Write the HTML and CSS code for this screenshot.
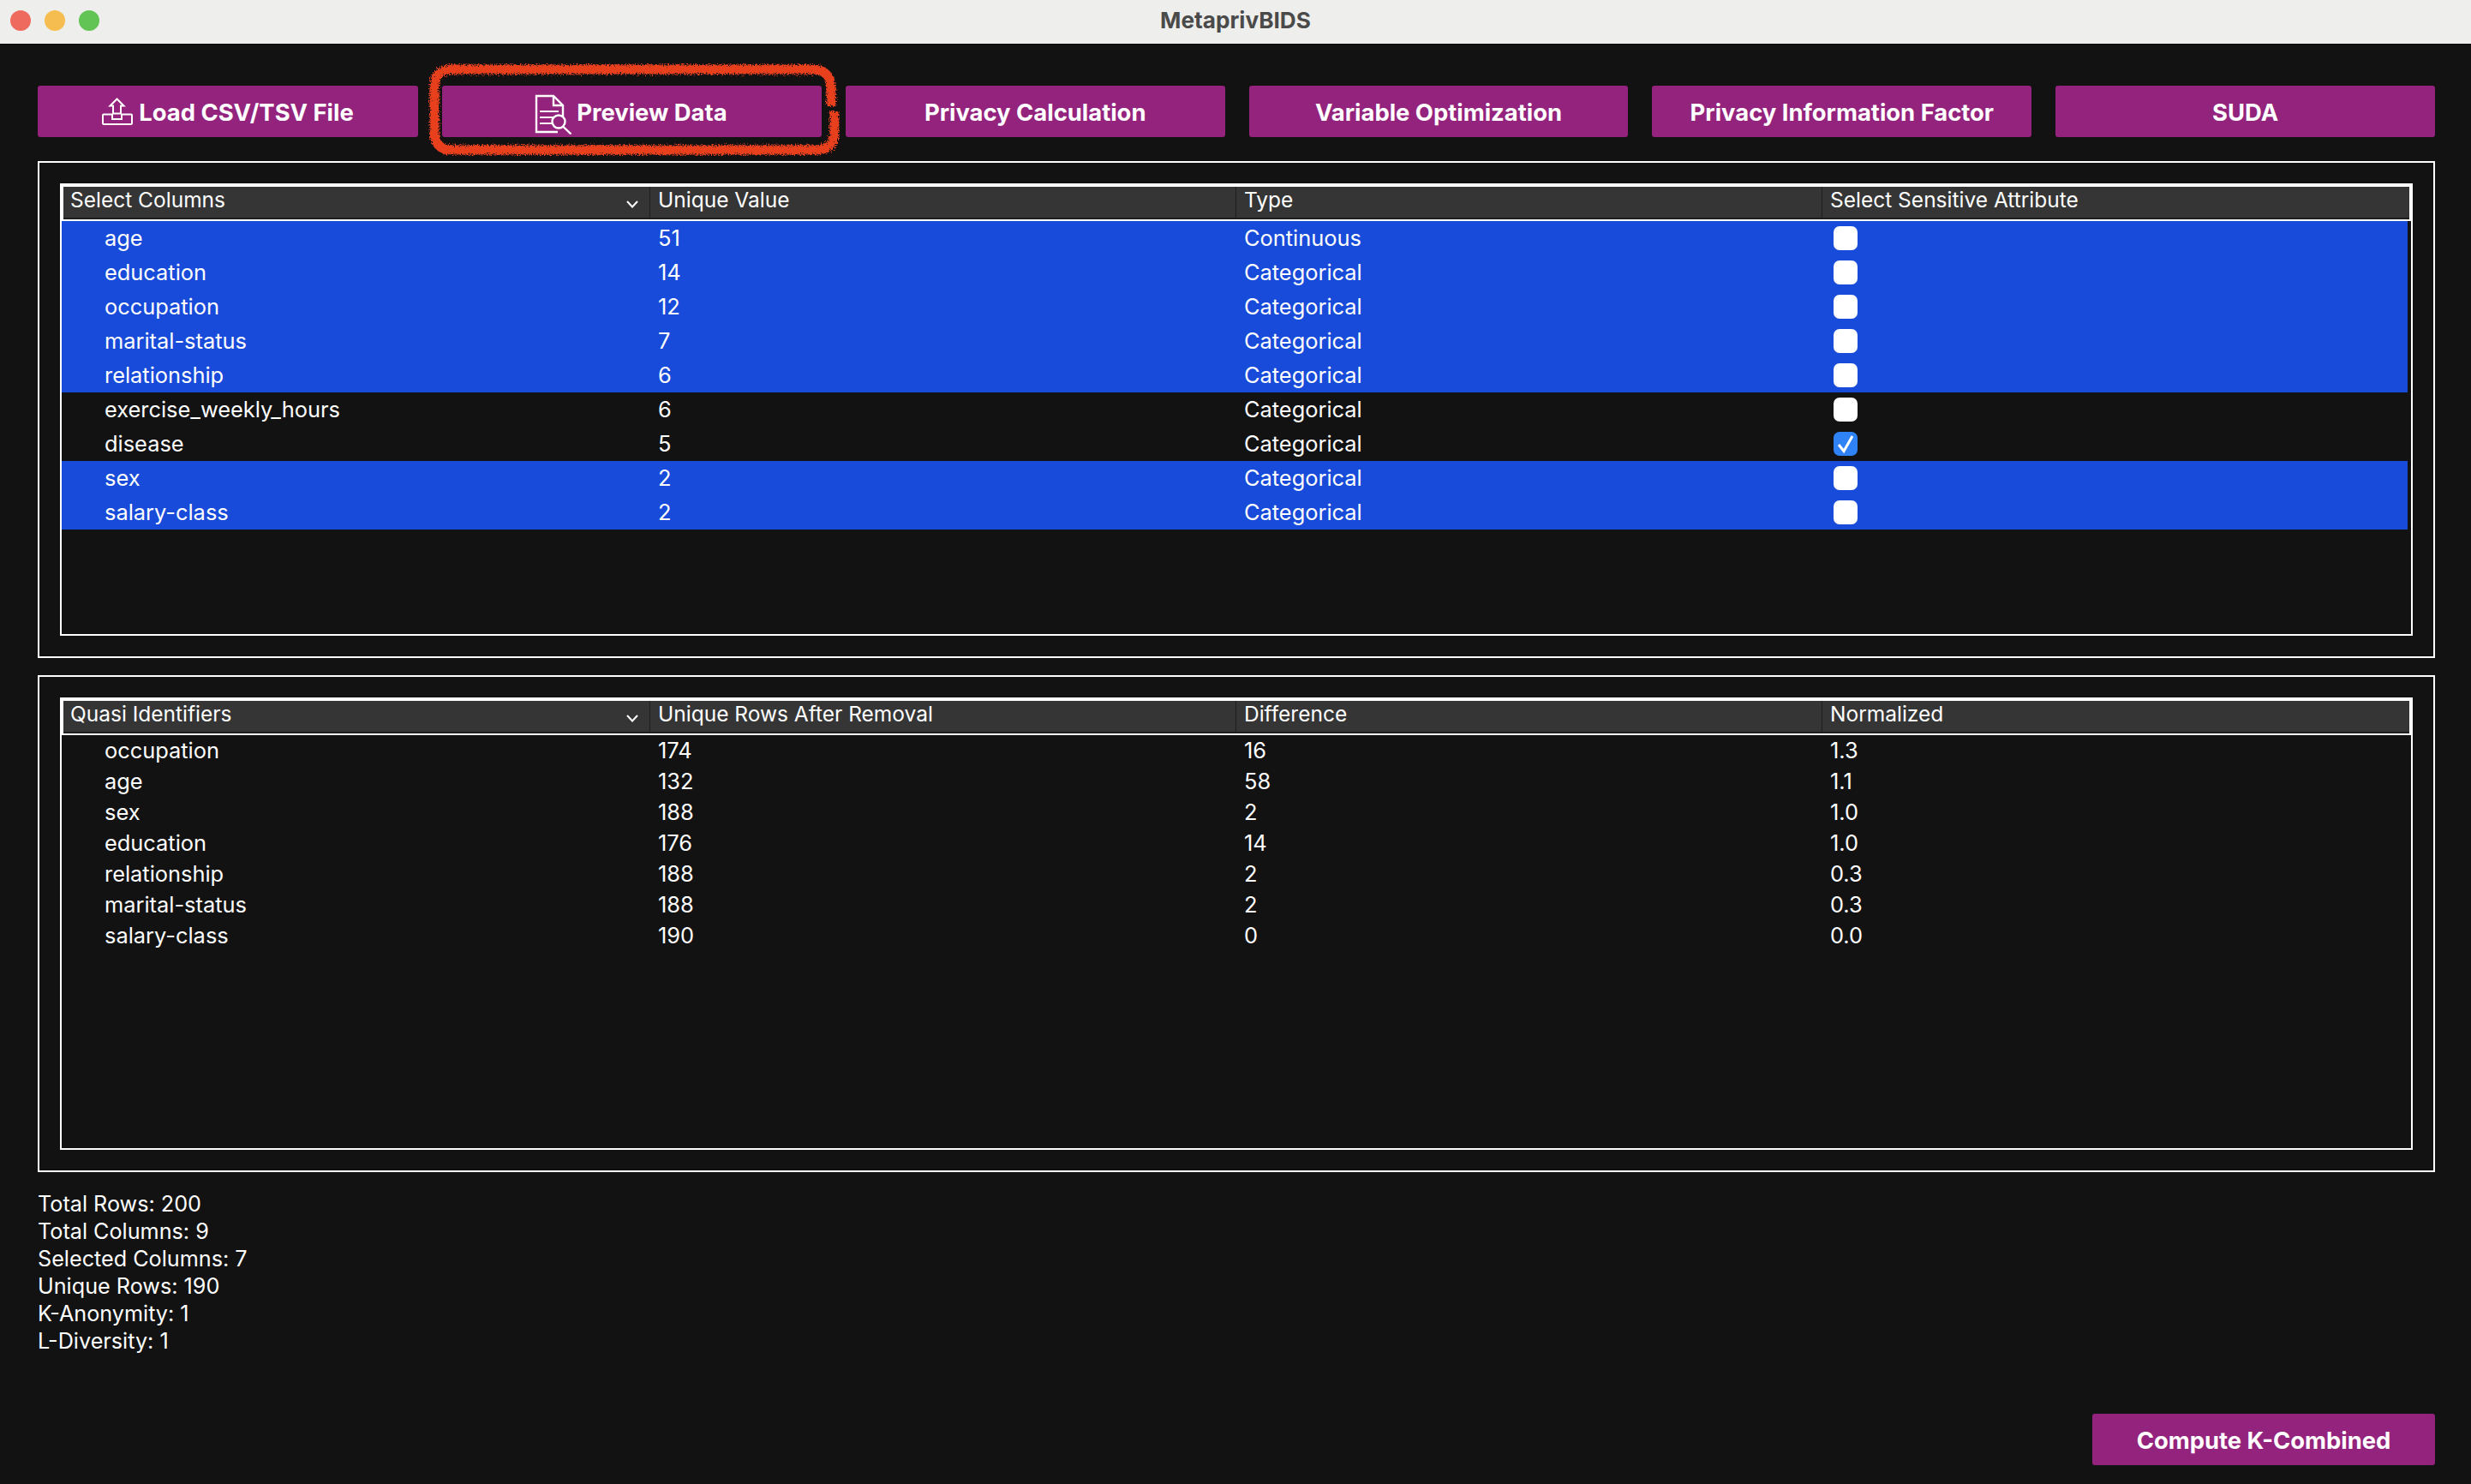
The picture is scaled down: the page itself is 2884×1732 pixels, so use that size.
FILE: index.html
```html
<!DOCTYPE html>
<html lang="en">
<head>
  <meta charset="UTF-8">
  <title>MetaprivBIDS</title>
  <link rel="stylesheet" href="styles.css">
</head>
<body>
  <header class="titlebar">
    <div class="lights">
      <span class="light red"></span>
      <span class="light yellow"></span>
      <span class="light green"></span>
    </div>
    <div class="title">MetaprivBIDS</div>
  </header>

  <main class="content">
    <div class="toolbar">
      <button class="btn">
        <svg class="icon-upload" viewBox="0 0 36 32" fill="none" stroke="currentColor" stroke-width="2">
          <path d="M17.5 1.5 L9.5 9.5 H13 V18.5 H22 V9.5 H25.5 Z"/>
          <path d="M12 19.5 H2 Q1 19.5 1 20.5 V29.5 Q1 31 2.5 31 H33.5 Q35 31 35 29.5 V20.5 Q35 19.5 34 19.5 H23 V25 H12 Z"/>
        </svg>
        Load CSV/TSV File
      </button>
      <button class="btn btn-preview">
        <svg class="icon-doc" viewBox="0 0 44 47" fill="none" stroke="currentColor" stroke-width="2.4">
          <path d="M27 44 H2 V2 H22 L33 13 V26"/>
          <path d="M22 2 V13 H33"/>
          <path d="M6 20 H28 M6 27 H22 M6 34 H20" stroke-width="2.2"/>
          <circle cx="28" cy="32" r="7.5"/>
          <path d="M33.5 38 L42.5 46.5"/>
        </svg>
        Preview Data
        <svg class="scribble" viewBox="0 0 480 108" fill="none">
          <defs>
            <filter id="rough" x="-5%" y="-15%" width="110%" height="130%">
              <feTurbulence type="fractalNoise" baseFrequency="0.7" numOctaves="2" seed="4"/>
              <feDisplacementMap in="SourceGraphic" scale="9"/>
            </filter>
          </defs>
          <path filter="url(#rough)" stroke="#e8401f" stroke-width="11"
            d="M470 50 V30 Q470 8 450 7 H26 Q7 8 7 28 V80 Q7 101 28 101 H452 Q474 101 474 80 V56"/>
        </svg>
      </button>
      <button class="btn">Privacy Calculation</button>
      <button class="btn">Variable Optimization</button>
      <button class="btn">Privacy Information Factor</button>
      <button class="btn">SUDA</button>
    </div>

    <section class="panel">
      <div class="table">
        <div class="thead">
          <div class="th th-first">Select Columns
            <svg class="chevron" viewBox="0 0 14 9" fill="none" stroke="currentColor" stroke-width="2"><path d="M1 1 L7 7.5 L13 1"/></svg>
          </div>
          <div class="th">Unique Value</div>
          <div class="th">Type</div>
          <div class="th">Select Sensitive Attribute</div>
        </div>
        <div class="tr selected"><div class="td-name">age</div><div class="td">51</div><div class="td">Continuous</div><div class="td-check"><span class="check"></span></div></div>
        <div class="tr selected"><div class="td-name">education</div><div class="td">14</div><div class="td">Categorical</div><div class="td-check"><span class="check"></span></div></div>
        <div class="tr selected"><div class="td-name">occupation</div><div class="td">12</div><div class="td">Categorical</div><div class="td-check"><span class="check"></span></div></div>
        <div class="tr selected"><div class="td-name">marital-status</div><div class="td">7</div><div class="td">Categorical</div><div class="td-check"><span class="check"></span></div></div>
        <div class="tr selected"><div class="td-name">relationship</div><div class="td">6</div><div class="td">Categorical</div><div class="td-check"><span class="check"></span></div></div>
        <div class="tr"><div class="td-name">exercise_weekly_hours</div><div class="td">6</div><div class="td">Categorical</div><div class="td-check"><span class="check"></span></div></div>
        <div class="tr"><div class="td-name">disease</div><div class="td">5</div><div class="td">Categorical</div><div class="td-check"><span class="check checked"><svg viewBox="0 0 28 28" fill="none" stroke="#fff" stroke-width="3"><path d="M6 15 L12 22.5 L22 5"/></svg></span></div></div>
        <div class="tr selected"><div class="td-name">sex</div><div class="td">2</div><div class="td">Categorical</div><div class="td-check"><span class="check"></span></div></div>
        <div class="tr selected"><div class="td-name">salary-class</div><div class="td">2</div><div class="td">Categorical</div><div class="td-check"><span class="check"></span></div></div>
      </div>
    </section>

    <section class="panel panel-quasi">
      <div class="table">
        <div class="thead">
          <div class="th th-first">Quasi Identifiers
            <svg class="chevron" viewBox="0 0 14 9" fill="none" stroke="currentColor" stroke-width="2"><path d="M1 1 L7 7.5 L13 1"/></svg>
          </div>
          <div class="th">Unique Rows After Removal</div>
          <div class="th">Difference</div>
          <div class="th">Normalized</div>
        </div>
        <div class="tr short"><div class="td-name">occupation</div><div class="td">174</div><div class="td">16</div><div class="td-last">1.3</div></div>
        <div class="tr short"><div class="td-name">age</div><div class="td">132</div><div class="td">58</div><div class="td-last">1.1</div></div>
        <div class="tr short"><div class="td-name">sex</div><div class="td">188</div><div class="td">2</div><div class="td-last">1.0</div></div>
        <div class="tr short"><div class="td-name">education</div><div class="td">176</div><div class="td">14</div><div class="td-last">1.0</div></div>
        <div class="tr short"><div class="td-name">relationship</div><div class="td">188</div><div class="td">2</div><div class="td-last">0.3</div></div>
        <div class="tr short"><div class="td-name">marital-status</div><div class="td">188</div><div class="td">2</div><div class="td-last">0.3</div></div>
        <div class="tr short"><div class="td-name">salary-class</div><div class="td">190</div><div class="td">0</div><div class="td-last">0.0</div></div>
      </div>
    </section>

    <div class="stats">
      <div>Total Rows: 200</div>
      <div>Total Columns: 9</div>
      <div>Selected Columns: 7</div>
      <div>Unique Rows: 190</div>
      <div>K-Anonymity: 1</div>
      <div>L-Diversity: 1</div>
    </div>

    <div class="footer">
      <button class="btn btn-compute">Compute K-Combined</button>
    </div>
  </main>
</body>
</html>
```

FILE: styles.css
```css
* {
  box-sizing: border-box;
}

html, body {
  margin: 0;
  height: 100%;
}

body {
  display: flex;
  flex-direction: column;
  background-color: #121212;
  color: #fff;
  font-family: Inter, "Noto Sans", sans-serif;
  font-size: 25.4px;
}

.titlebar {
  height: 52px;
  flex: none;
  display: flex;
  align-items: center;
  justify-content: center;
  position: relative;
  background-color: #eeeeec;
  border-bottom: 1px solid #0a0a0a;
}

.lights {
  position: absolute;
  left: 12px;
  top: 12px;
  display: flex;
  gap: 16px;
}

.light {
  width: 24px;
  height: 24px;
  border-radius: 50%;
}

.red { background-color: #ee6a5f; }
.yellow { background-color: #f5bd4f; }
.green { background-color: #61c454; }

.title {
  color: #4a4a4a;
  font-size: 26.2px;
  font-weight: 700;
  margin-bottom: 4px;
}

.content {
  flex: 1;
  display: flex;
  flex-direction: column;
  padding: 48px 42px 22px 44px;
}

.toolbar {
  display: grid;
  grid-template-columns: 444px repeat(5, 1fr);
  gap: 28px;
  margin-bottom: 28px;
}

.btn {
  height: 60px;
  display: flex;
  align-items: center;
  justify-content: center;
  gap: 9px;
  position: relative;
  padding: 2px 0 0;
  border: none;
  border-radius: 3px;
  background-color: #94237d;
  color: #fff;
  font-family: inherit;
  font-size: 27.4px;
  font-weight: 700;
}

.btn-preview {
  gap: 5px;
  padding-right: 2px;
}

.icon-upload {
  width: 36px;
  height: 32px;
  margin-bottom: 2px;
  margin-right: -2px;
}

.icon-doc {
  width: 44px;
  height: 47px;
  margin-top: 4px;
}

.scribble {
  position: absolute;
  left: -16px;
  top: -26px;
  width: 480px;
  height: 108px;
}

.panel {
  height: 580px;
  padding: 24px;
  border: 2px solid #fff;
  margin-bottom: 20px;
}

.table {
  height: 100%;
  border: 2px solid #fff;
}

.thead {
  display: grid;
  grid-template-columns: 685px 684px 684px 1fr;
  height: 42px;
  border: 2px solid #fff;
  background-color: #353535;
  box-shadow: inset 0 -2px 0 #1e1e1e;
  font-size: 24.5px;
}

.th {
  display: flex;
  align-items: center;
  padding: 0 0 8px 9px;
  border-right: 1px solid #1e1e1e;
}

.th:last-child {
  border-right: none;
}

.th-first {
  justify-content: space-between;
  padding-left: 8px;
  padding-right: 13px;
}

.chevron {
  width: 14px;
  height: 9px;
  margin-top: 10px;
}

.tr {
  display: grid;
  grid-template-columns: 687px 684px 684px 1fr;
  align-items: center;
  height: 40px;
  margin-right: 4px;
}

.tr.short {
  height: 36px;
}

.selected {
  background-color: #184bd9;
}

.td-name, .td, .td-last {
  padding-bottom: 2px;
}

.td-name {
  padding-left: 50px;
}

.td, .td-last {
  padding-left: 9px;
}

.td-check {
  display: flex;
  padding-left: 13px;
}

.check {
  width: 28px;
  height: 28px;
  border-radius: 7px;
  background-color: #fff;
}

.check.checked {
  background-color: #2f83f7;
}

.check svg {
  display: block;
}

.stats {
  margin-top: 1px;
  font-size: 25.2px;
  line-height: 32px;
}

.footer {
  margin-top: auto;
  display: flex;
  justify-content: flex-end;
}

.btn-compute {
  width: 400px;
}
```
